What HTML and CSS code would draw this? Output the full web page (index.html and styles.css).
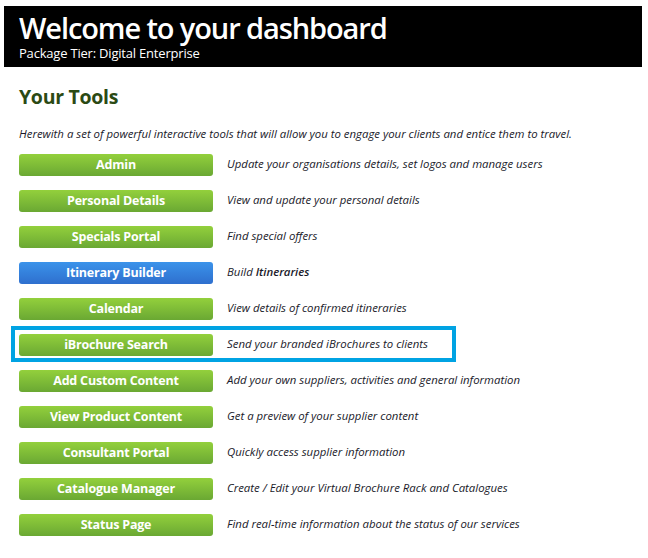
FILE: index.html
```html
<!DOCTYPE html>
<html>
<head>
<meta charset="utf-8">
<link rel="stylesheet" href="styles.css">
</head>
<body>
<header class="banner">
  <h1 class="banner-title">Welcome to your dashboard</h1>
  <div class="banner-sub">Package Tier: Digital Enterprise</div>
</header>
<main class="tools">
  <h2 class="tools-title">Your Tools</h2>
  <p class="tools-intro">Herewith a set of powerful interactive tools that will allow you to engage your clients and entice them to travel.</p>
  <ul class="tool-list">
    <li class="tool"><a class="btn">Admin</a><span class="tool-desc">Update your organisations details, set logos and manage users</span></li>
    <li class="tool"><a class="btn">Personal Details</a><span class="tool-desc">View and update your personal details</span></li>
    <li class="tool"><a class="btn">Specials Portal</a><span class="tool-desc">Find special offers</span></li>
    <li class="tool"><a class="btn btn-blue">Itinerary Builder</a><span class="tool-desc">Build <b>Itineraries</b></span></li>
    <li class="tool"><a class="btn">Calendar</a><span class="tool-desc">View details of confirmed itineraries</span></li>
    <li class="tool tool-active"><a class="btn">iBrochure Search</a><span class="tool-desc">Send your branded iBrochures to clients</span></li>
    <li class="tool"><a class="btn">Add Custom Content</a><span class="tool-desc">Add your own suppliers, activities and general information</span></li>
    <li class="tool"><a class="btn">View Product Content</a><span class="tool-desc">Get a preview of your supplier content</span></li>
    <li class="tool"><a class="btn">Consultant Portal</a><span class="tool-desc">Quickly access supplier information</span></li>
    <li class="tool"><a class="btn">Catalogue Manager</a><span class="tool-desc">Create / Edit your Virtual Brochure Rack and Catalogues</span></li>
    <li class="tool"><a class="btn">Status Page</a><span class="tool-desc">Find real-time information about the status of our services</span></li>
  </ul>
</main>
</body>
</html>
```

FILE: styles.css
```css
* { box-sizing: border-box; }
html, body { margin: 0; padding: 0; background: #fff; }
body { font-family: "Open Sans", "Liberation Sans", sans-serif; color: #1a1a1a; }

.banner {
  margin: 6px 6px 0 4px;
  height: 61px;
  background: #000;
  color: #fff;
  padding: 5px 15px 0 15px;
}
.banner-title {
  margin: 0;
  font-size: 29px;
  font-weight: 600;
  line-height: 33px;
  letter-spacing: -1.1px;
}
.banner-sub {
  margin-top: 1px;
  font-size: 13px;
  line-height: 16px;
  letter-spacing: -0.2px;
}

.tools { padding: 0 0 0 11px; }
.tools-title {
  margin: 17px 0 0 8px;
  font-size: 19.5px;
  line-height: 26px;
  font-weight: 700;
  letter-spacing: -0.3px;
  color: #2b4a14;
}
.tools-intro {
  margin: 16px 0 4px 8px;
  font-size: 11.4px;
  line-height: 16px;
  font-style: italic;
  color: #1a1a2a;
}
.tool-list { list-style: none; margin: 0; padding: 0; }
.tool {
  display: flex;
  align-items: center;
  width: 445px;
  height: 36px;
  border: 4px solid transparent;
  padding: 3px 0 1px 4px;
}
.tool-active { border-color: #00a3e3; }
.btn {
  flex: none;
  width: 194px;
  height: 22px;
  border-radius: 3px;
  background: linear-gradient(#93d03c, #6aa833);
  color: #fff;
  font-size: 12.5px;
  font-weight: 700;
  line-height: 22px;
  text-align: center;
  letter-spacing: -0.2px;
}
.btn-blue { background: linear-gradient(#3b93ea, #2e6fce); }
.tool-desc {
  margin: 0 0 2px 14px;
  font-size: 11.4px;
  line-height: 16px;
  font-style: italic;
  white-space: nowrap;
  color: #1a1a2a;
}
.tool-desc b { font-weight: 600; }
```
